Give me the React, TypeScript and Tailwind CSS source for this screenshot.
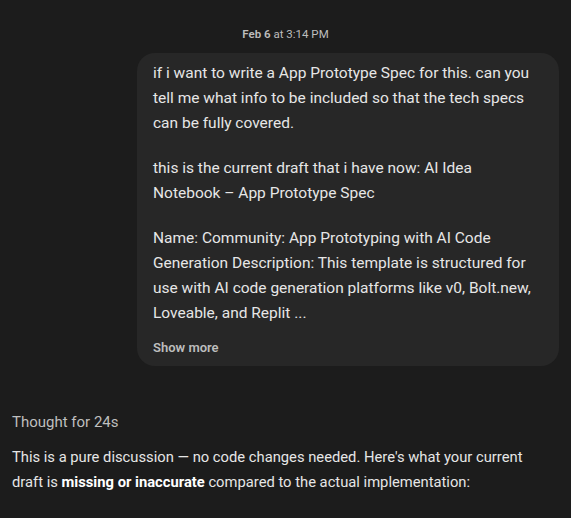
import React from 'react';

export default function App() {
    return (
        <div className="min-h-[518px] w-full bg-[#1c1c1c] text-[#e6e6e6] font-['Roboto',sans-serif] overflow-hidden">
            {/* Timestamp */}
            <div className="pt-[26px] text-center text-[11.5px] leading-[16px] text-[#bdbdbd]">
                <span className="font-semibold">Feb 6</span> at 3:14 PM
            </div>

            {/* User message */}
            <div className="flex justify-end pr-3 mt-[11px]">
                <div className="w-[422px] rounded-[18px] bg-[#272727] px-4 pt-[8px] pb-[6px] text-[15.5px] leading-[25px]">
                    <p>if i want to write a App Prototype Spec for this. can you tell me what info to be included so that the tech specs can be fully covered.</p>
                    <p className="mt-5">this is the current draft that i have now: AI Idea Notebook – App Prototype Spec</p>
                    <p className="mt-5">Name: Community: App Prototyping with AI Code Generation Description: This template is structured for use with AI code generation platforms like v0, Bolt.new, Loveable, and Replit ...</p>
                    <div className="mt-[9px] text-[13px] font-semibold text-[#bdbdbd]">Show more</div>
                </div>
            </div>

            {/* Assistant reply */}
            <div className="pl-3 pr-[30px] mt-[44px] leading-[25px]">
                <div className="text-[15px] text-[#bfbfbf]">Thought for 24s</div>
                <p className="mt-[10px] text-[14.75px] text-[#e6e6e6]">
                    This is a pure discussion — no code changes needed. Here's what your current draft is <strong className="font-bold text-white">missing or inaccurate</strong> compared to the actual implementation:
                </p>
            </div>
        </div>
    );
}
